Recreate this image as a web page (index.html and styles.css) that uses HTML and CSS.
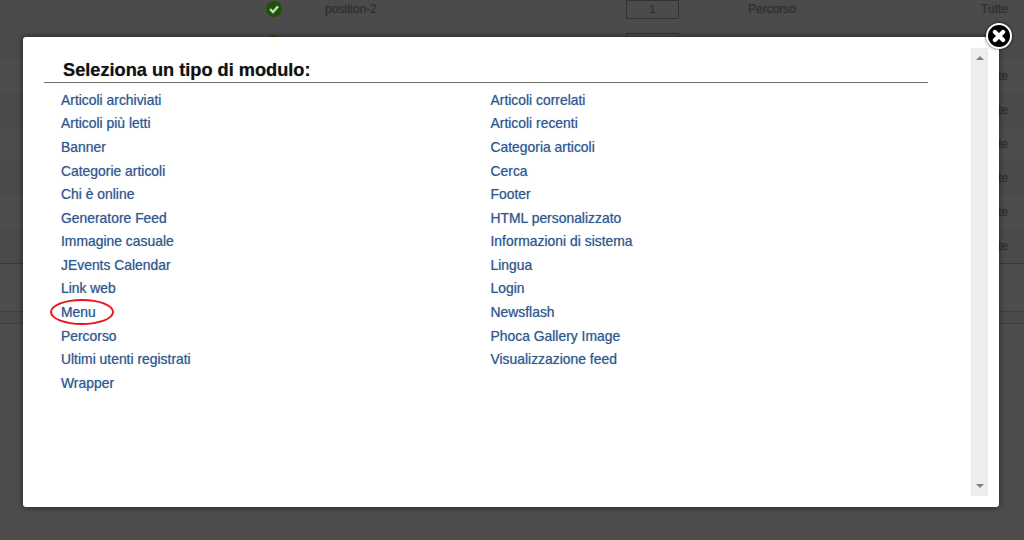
FILE: index.html
```html
<!DOCTYPE html>
<html lang="it">
<head>
<meta charset="utf-8">
<title>Seleziona un tipo di modulo</title>
<link rel="stylesheet" href="styles.css">
</head>
<body>
<div class="screen">
  <div class="backdrop">
    <div class="row first">
      <span class="cell"></span>
      <span class="cell check-cell"><svg class="check" viewBox="0 0 16 16"><circle cx="8" cy="8" r="8" fill="#1d5208"/><path d="M4 8.2 7 11l5-5.6" fill="none" stroke="#c9d4c2" stroke-width="2.4"/></svg></span>
      <span class="cell name">position-2</span>
      <span class="cell order"><span class="order-box">1</span></span>
      <span class="cell name">Percorso</span>
      <span class="cell pages">Tutte</span>
    </div>
    <div class="row second">
      <span class="cell"></span>
      <span class="cell check-cell"><svg class="check" viewBox="0 0 16 16"><circle cx="8" cy="8" r="8" fill="#1d5208"/><path d="M4 8.2 7 11l5-5.6" fill="none" stroke="#c9d4c2" stroke-width="2.4"/></svg></span>
      <span class="cell name"></span>
      <span class="cell order"><span class="order-box">2</span></span>
      <span class="cell name"></span>
      <span class="cell pages">Tutte</span>
    </div>
    <div class="row alt"><span class="cell"></span><span class="cell"></span><span class="cell"></span><span class="cell"></span><span class="cell"></span><span class="cell pages">Tutte</span></div>
    <div class="row"><span class="cell"></span><span class="cell"></span><span class="cell"></span><span class="cell"></span><span class="cell"></span><span class="cell pages">Tutte</span></div>
    <div class="row alt"><span class="cell"></span><span class="cell"></span><span class="cell"></span><span class="cell"></span><span class="cell"></span><span class="cell pages">Tutte</span></div>
    <div class="row"><span class="cell"></span><span class="cell"></span><span class="cell"></span><span class="cell"></span><span class="cell"></span><span class="cell pages">Tutte</span></div>
    <div class="row alt"><span class="cell"></span><span class="cell"></span><span class="cell"></span><span class="cell"></span><span class="cell"></span><span class="cell pages">Tutte</span></div>
    <div class="row last"><span class="cell"></span><span class="cell"></span><span class="cell"></span><span class="cell"></span><span class="cell"></span><span class="cell pages">Tutte</span></div>
    <div class="footer-band"></div>
    <div class="footer-strip"></div>
  </div>

  <div class="modal">
    <div class="modal-body">
      <h2 class="modal-title">Seleziona un tipo di modulo:</h2>
      <ul class="module-list">
        <li><a href="#">Articoli archiviati</a></li>
        <li><a href="#">Articoli correlati</a></li>
        <li><a href="#">Articoli più letti</a></li>
        <li><a href="#">Articoli recenti</a></li>
        <li><a href="#">Banner</a></li>
        <li><a href="#">Categoria articoli</a></li>
        <li><a href="#">Categorie articoli</a></li>
        <li><a href="#">Cerca</a></li>
        <li><a href="#">Chi è online</a></li>
        <li><a href="#">Footer</a></li>
        <li><a href="#">Generatore Feed</a></li>
        <li><a href="#">HTML personalizzato</a></li>
        <li><a href="#">Immagine casuale</a></li>
        <li><a href="#">Informazioni di sistema</a></li>
        <li><a href="#">JEvents Calendar</a></li>
        <li><a href="#">Lingua</a></li>
        <li><a href="#">Link web</a></li>
        <li><a href="#">Login</a></li>
        <li><a href="#" class="circled">Menu</a></li>
        <li><a href="#">Newsflash</a></li>
        <li><a href="#">Percorso</a></li>
        <li><a href="#">Phoca Gallery Image</a></li>
        <li><a href="#">Ultimi utenti registrati</a></li>
        <li><a href="#">Visualizzazione feed</a></li>
        <li><a href="#">Wrapper</a></li>
      </ul>
    </div>
    <div class="scrollbar">
      <span class="arrow up"></span>
      <span class="arrow down"></span>
    </div>
    <button class="close" type="button" aria-label="Chiudi">
      <svg viewBox="0 0 12 12"><path d="M2.5 2.5l7 7M9.5 2.5l-7 7" stroke="#fff" stroke-width="3.6" stroke-linecap="round"/></svg>
    </button>
  </div>
</div>
</body>
</html>
```

FILE: styles.css
```css
* { box-sizing: border-box; }

html, body {
  margin: 0;
  height: 100%;
  overflow: hidden;
  background: #4c4c4c;
}

.screen {
  position: relative;
  width: 1024px;
  height: 540px;
  overflow: hidden;
  font-family: "Liberation Sans", Arial, sans-serif;
}

/* dimmed page behind the dialog */
.backdrop {
  display: flex;
  flex-direction: column;
  height: 100%;
  background: #4c4c4c;
}

.row {
  display: grid;
  grid-template-columns: 228px 85px 255px 168px 171px 117px;
  height: 34px;
  flex: none;
  background: #4b4b4b;
  border-bottom: 1px solid #494949;
}
.row.first { height: 25px; }
.row.alt { background: #4d4d4d; }
.row.last { height: 35px; border-bottom: 1px solid #3a3a3a; }

.cell {
  display: flex;
  align-items: center;
  height: 100%;
  padding: 0 12px;
  font-size: 12px;
  color: #2e2e2e;
  border-right: 1px solid #484848;
  text-shadow: 0 0 1px rgba(46, 46, 46, 0.5);
}
.row.first .cell { padding-bottom: 7px; }

.check-cell { justify-content: center; padding: 0; }
.row.first .check-cell { padding: 0 0 7px 8px; }
.row.second .check-cell { padding: 2px 0 0 8px; }
.check { display: block; width: 16px; height: 16px; }

.order { justify-content: center; padding: 0 0 0 2px; }
.order-box {
  display: flex;
  align-items: center;
  justify-content: center;
  width: 53px;
  height: 19px;
  border: 1px solid #333;
  font-size: 10px;
}
.row.first .order { align-items: flex-start; padding: 0 0 0 2px; }
.row.second .order { padding: 2px 0 0 2px; }

.pages { justify-content: flex-end; padding: 0 16px 0 0; border-right: 0; }
.row.first .pages { padding: 0 16px 7px 0; }

.footer-band {
  height: 48px;
  flex: none;
  background: #4d4d4d;
  border-bottom: 1px solid #3f3f3f;
}
.footer-strip {
  height: 12px;
  flex: none;
  background: #4a4a4a;
  border-bottom: 1px solid #404040;
}

/* dialog */
.modal {
  position: absolute;
  left: 23px;
  top: 37px;
  width: 976px;
  height: 470px;
  display: flex;
  background: #fff;
  border-radius: 3px;
  box-shadow: 0 0 6px rgba(0, 0, 0, 0.55);
}

.modal-body {
  flex: 1;
  padding: 21px 0 0 21px;
  min-width: 0;
}

.modal-title {
  width: 884px;
  margin: 0;
  height: 25px;
  padding-left: 19px;
  border-bottom: 1px solid #6e6e6e;
  font-size: 18.2px;
  line-height: 24px;
  font-weight: bold;
  color: #111;
  text-shadow: 0 0 1px rgba(17, 17, 17, 0.45);
}

.module-list {
  display: grid;
  grid-template-columns: 429.5px 429.5px;
  grid-auto-rows: 23.58px;
  margin: 0;
  padding: 5.8px 0 0 17px;
  list-style: none;
}
.module-list li { font-size: 13.9px; line-height: 23.58px; }
.module-list a {
  position: relative;
  color: #30578f;
  text-decoration: none;
  text-shadow: 0 0 1px rgba(48, 87, 143, 0.55);
}

.circled::after {
  content: "";
  position: absolute;
  left: -11px;
  right: -18px;
  top: -5px;
  bottom: -5px;
  border: 2px solid #e8141e;
  border-radius: 50%;
}

.scrollbar {
  display: flex;
  flex-direction: column;
  justify-content: space-between;
  align-items: center;
  width: 17px;
  height: 448px;
  margin: 11px 11px 0 0;
  padding: 7px 0;
  background: #eeeeee;
  border: 1px solid #ebebeb;
  flex: none;
}
.arrow {
  width: 0;
  height: 0;
  border-left: 4px solid transparent;
  border-right: 4px solid transparent;
}
.arrow.up { border-bottom: 4px solid #808080; }
.arrow.down { border-top: 4px solid #808080; }

.close {
  position: absolute;
  right: -13px;
  top: -14px;
  width: 26px;
  height: 26px;
  padding: 4px;
  background: #000;
  border: 2px solid #fff;
  border-radius: 50%;
  box-shadow: 0 0 3px rgba(0, 0, 0, 0.8);
}
.close svg { display: block; width: 100%; height: 100%; }
```
